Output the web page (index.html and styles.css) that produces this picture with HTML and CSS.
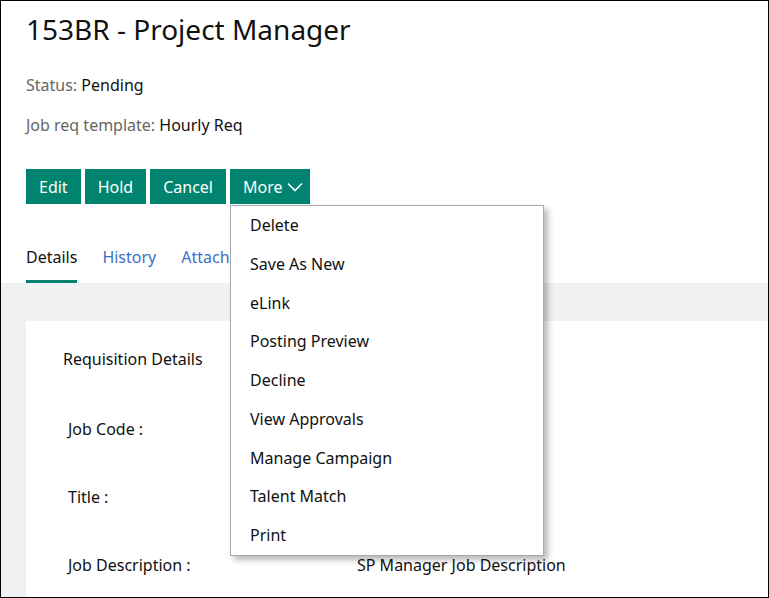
FILE: index.html
```html
<!DOCTYPE html>
<html>
<head>
<meta charset="utf-8">
<link rel="stylesheet" href="styles.css">
</head>
<body>
<div class="frame">
  <header class="head">
    <h1 class="title">153BR - Project Manager</h1>
    <p class="meta"><span class="lbl">Status:</span> Pending</p>
    <p class="meta"><span class="lbl">Job req template:</span> Hourly Req</p>
    <div class="actions">
      <button class="btn">Edit</button>
      <button class="btn">Hold</button>
      <button class="btn">Cancel</button>
      <button class="btn more">More <svg class="chev" width="16" height="10" viewBox="0 0 16 10"><path d="M1 1.5 L8 8.5 L15 1.5" fill="none" stroke="#fff" stroke-width="1.6"/></svg></button>
    </div>
    <nav class="tabs">
      <a class="tab active">Details</a>
      <a class="tab">History</a>
      <a class="tab">Attachments</a>
    </nav>
  </header>
  <main class="body">
    <section class="card">
      <h2 class="card-title">Requisition Details</h2>
      <div class="fields">
        <div class="f-lbl">Job Code :</div><div class="f-val">Project Manager</div>
        <div class="f-lbl">Title :</div><div class="f-val">Project Manager</div>
        <div class="f-lbl">Job Description :</div><div class="f-val">SP Manager Job Description</div>
      </div>
    </section>
  </main>
  <ul class="menu">
    <li>Delete</li>
    <li>Save As New</li>
    <li>eLink</li>
    <li>Posting Preview</li>
    <li>Decline</li>
    <li>View Approvals</li>
    <li>Manage Campaign</li>
    <li>Talent Match</li>
    <li>Print</li>
  </ul>
</div>
</body>
</html>
```

FILE: styles.css
```css
* { box-sizing: border-box; }
html, body { margin: 0; padding: 0; }
body {
  font-family: "Noto Sans", "DejaVu Sans", sans-serif;
  color: #111;
  background: #fff;
}
.frame {
  position: relative;
  width: 769px;
  height: 598px;
  border: 1px solid #000;
  overflow: hidden;
  display: flex;
  flex-direction: column;
}
.head {
  padding-left: 25px;
}
.title {
  margin: 10px 0 0;
  font-size: 28px;
  font-weight: 400;
  line-height: 36px;
  color: #111;
}
.meta {
  margin: 0;
  font-size: 16px;
  line-height: 20px;
  color: #111;
}
.title + .meta { margin-top: 28px; }
.meta + .meta { margin-top: 20px; }
.lbl { color: #666; }
.actions {
  display: flex;
  gap: 4px;
  margin-top: 34px;
}
.btn {
  height: 35px;
  border: 0;
  background: #008470;
  color: #fff;
  font-family: inherit;
  font-size: 16px;
  padding: 0 13px;
  display: flex;
  align-items: center;
  gap: 4px;
}
.btn.more { padding: 0 7px 0 13px; gap: 5px; }
.chev { display: block; margin-top: 1px; }
.tabs {
  display: flex;
  gap: 25px;
  margin-top: 40px;
}
.tab {
  font-size: 16px;
  line-height: 26px;
  padding-bottom: 10px;
  color: #3f6fc4;
  border-bottom: 3px solid transparent;
}
.tab.active {
  color: #111;
  border-bottom-color: #008470;
}
.body {
  flex: 1;
  background: #f0f1f2;
  padding: 38px 0 0 25px;
}
.card {
  background: #fff;
  height: 100%;
  padding: 26px 0 0 37px;
}
.card-title {
  margin: 0;
  font-size: 16px;
  font-weight: 400;
  line-height: 24px;
}
.fields {
  display: grid;
  grid-template-columns: 289px 1fr;
  grid-auto-rows: 68px;
  margin-top: 46px;
  padding-left: 5px;
  font-size: 16px;
  line-height: 24px;
}
.menu {
  position: absolute;
  left: 229px;
  top: 204px;
  width: 314px;
  margin: 0;
  padding: 0;
  list-style: none;
  background: #fff;
  border: 1px solid #aaa;
  box-shadow: 4px 4px 6px rgba(0,0,0,0.28);
}
.menu li {
  height: 38.75px;
  line-height: 38.75px;
  padding-left: 19px;
  font-size: 16px;
  color: #111;
}
```
